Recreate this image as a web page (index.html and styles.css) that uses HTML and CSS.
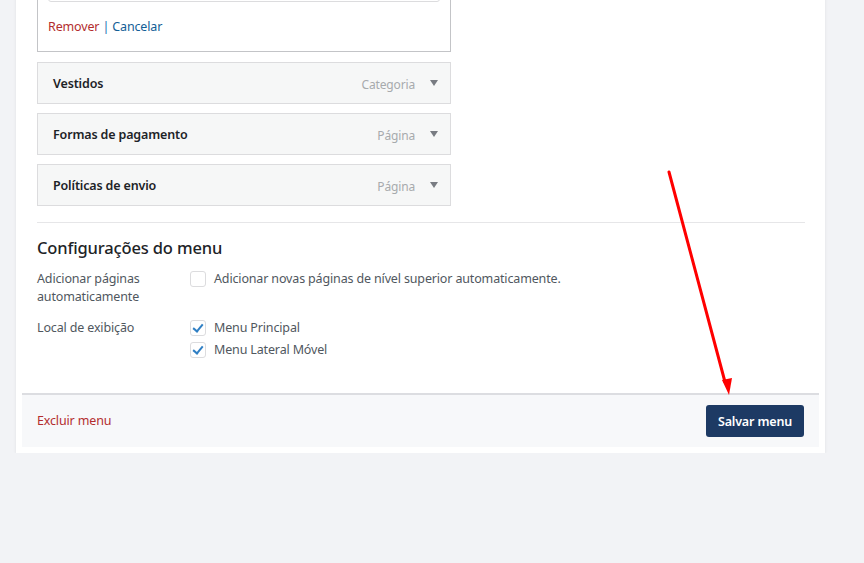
FILE: index.html
```html
<!DOCTYPE html>
<html lang="pt-BR">
<head>
    <meta charset="UTF-8">
    <meta name="viewport" content="width=device-width, initial-scale=1.0">
    <title>Menus</title>
    <link rel="stylesheet" href="styles.css">
</head>
<body>
    <div class="page">
        <div class="menu-panel">
            <div class="menu-body">
                <ul class="menu-items">
                    <!-- item aberto (cortado no topo) -->
                    <li class="menu-item open">
                        <div class="item-settings">
                            <div class="field"></div>
                            <p class="item-actions">
                                <a href="#" class="link-delete">Remover</a> <span class="sep">|</span> <a href="#" class="link-cancel">Cancelar</a>
                            </p>
                        </div>
                    </li>
                    <li class="menu-item">
                        <div class="item-bar">
                            <span class="item-title">Vestidos</span>
                            <span class="item-type">Categoria</span>
                            <span class="item-arrow"></span>
                        </div>
                    </li>
                    <li class="menu-item">
                        <div class="item-bar">
                            <span class="item-title">Formas de pagamento</span>
                            <span class="item-type">Página</span>
                            <span class="item-arrow"></span>
                        </div>
                    </li>
                    <li class="menu-item">
                        <div class="item-bar">
                            <span class="item-title">Políticas de envio</span>
                            <span class="item-type">Página</span>
                            <span class="item-arrow"></span>
                        </div>
                    </li>
                </ul>

                <div class="menu-settings">
                    <h3>Configurações do menu</h3>

                    <div class="setting-row">
                        <div class="setting-label">Adicionar páginas automaticamente</div>
                        <div class="setting-options">
                            <label class="option"><span class="check"></span>Adicionar novas páginas de nível superior automaticamente.</label>
                        </div>
                    </div>

                    <div class="setting-row">
                        <div class="setting-label">Local de exibição</div>
                        <div class="setting-options">
                            <label class="option"><span class="check checked"></span>Menu Principal</label>
                            <label class="option"><span class="check checked"></span>Menu Lateral Móvel</label>
                        </div>
                    </div>
                </div>
            </div>

            <div class="menu-footer">
                <a href="#" class="delete-menu">Excluir menu</a>
                <button type="button" class="save-menu">Salvar menu</button>
            </div>
        </div>
    </div>

    <!-- seta vermelha de anotação -->
    <svg class="annotation" width="864" height="563" viewBox="0 0 864 563">
        <line x1="669" y1="172" x2="725" y2="382" stroke="#ff0000" stroke-width="3" stroke-linecap="round"/>
        <polygon points="722,380 732,378 729,395" fill="#ff0000"/>
    </svg>
</body>
</html>
```

FILE: styles.css
```css
* {
    box-sizing: border-box;
}
body {
    margin: 0;
    background-color: #f2f3f6;
    color: #3c434a;
    font-family: "Noto Sans", "Open Sans", sans-serif;
    font-size: 12.5px;
    letter-spacing: -0.15px;
    line-height: 18px;
    overflow: hidden;
}
a {
    text-decoration: none;
}
.page {
    padding-left: 16px;
}
.menu-panel {
    width: 809px;
    margin-top: -50px;
    background: #fff;
    padding: 0 6px 6px;
    box-shadow: 0 1px 3px rgba(0, 0, 0, 0.08);
}
.menu-body {
    padding: 11px 14px 32px 15px;
}

/* itens do menu */
.menu-items {
    list-style: none;
    margin: 0;
    padding: 0;
    width: 414px;
}
.menu-item {
    margin-top: 9px;
}
.menu-item.open {
    margin-top: 0;
    margin-bottom: 10px;
}
.item-settings {
    border: 1px solid #c3c4c7;
    padding: 10px 10px 15px;
}
.field {
    height: 30px;
    border: 1px solid #dcdcde;
    border-radius: 3px;
}
.item-actions {
    margin: 16px 0 0;
}
.link-delete {
    color: #b32d2e;
}
.sep {
    color: #2271b1;
}
.link-cancel {
    color: #135e96;
}
.item-bar {
    height: 42px;
    display: flex;
    align-items: center;
    background: #f6f7f7;
    border: 1px solid #dcdcde;
    padding: 2px 12px 0 15px;
}
.item-title {
    flex: 1;
    font-weight: 600;
    color: #1d2327;
}
.item-type {
    font-size: 12px;
    color: #a7aaad;
    margin-right: 15px;
    padding-top: 2px;
}
.item-arrow {
    width: 0;
    height: 0;
    border-left: 4.5px solid transparent;
    border-right: 4.5px solid transparent;
    border-top: 6px solid #787c82;
    margin-top: -3px;
}

/* configurações */
.menu-settings {
    margin-top: 16px;
    border-top: 1px solid #e6e6e8;
}
.menu-settings h3 {
    margin: 13px 0 10px;
    font-size: 16.5px;
    line-height: 24px;
    font-weight: 500;
    color: #1d2327;
}
.setting-row {
    display: flex;
    margin-bottom: 13px;
}
.setting-row:last-child {
    margin-bottom: 0;
}
.setting-label {
    width: 153px;
    color: #50575e;
}
.setting-options {
    display: flex;
    flex-direction: column;
    margin-top: -2px;
}
.option {
    display: flex;
    align-items: center;
    height: 22px;
    color: #50575e;
}
.check {
    width: 16px;
    height: 16px;
    border: 1px solid #dcdcde;
    border-radius: 3px;
    background: #fff;
    margin-right: 8px;
    position: relative;
}
.check.checked::after {
    content: "";
    position: absolute;
    left: 4px;
    top: 1px;
    width: 4px;
    height: 8px;
    border: solid #2f7fc4;
    border-width: 0 2.5px 2.5px 0;
    transform: rotate(40deg);
}

/* rodapé */
.menu-footer {
    display: flex;
    align-items: center;
    justify-content: space-between;
    background: #f7f8fa;
    border-top: 2px solid #dcdde1;
    padding: 10px 15px 10px 15px;
}
.delete-menu {
    color: #b32d2e;
}
.save-menu {
    height: 32px;
    width: 98px;
    background: #1d3a64;
    color: #fff;
    border: none;
    border-radius: 3px;
    font-family: inherit;
    font-size: 12.5px;
    font-weight: 600;
    letter-spacing: -0.15px;
    cursor: pointer;
}

.annotation {
    position: absolute;
    top: 0;
    left: 0;
    pointer-events: none;
}
```
